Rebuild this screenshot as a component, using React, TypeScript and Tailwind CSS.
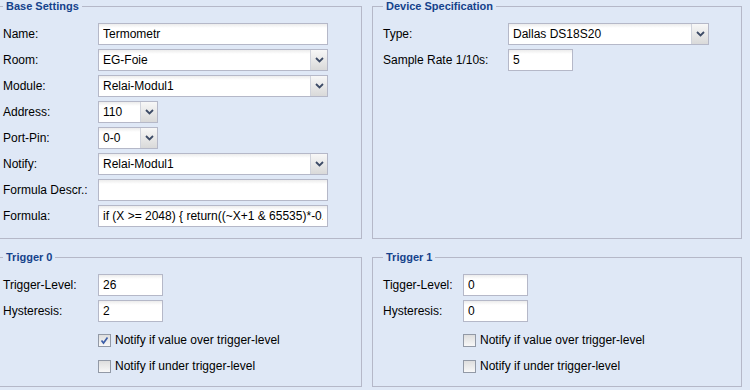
import React from "react";

const inputCls =
  "h-[22px] border border-[#b5b8c8] bg-[linear-gradient(#ececec,#ffffff_4px)] px-[4px] text-[12px] text-black outline-none font-['Liberation_Sans',Arial,sans-serif]";

const Row = ({ label, labelW, children }: { label: string; labelW: string; children: React.ReactNode }) => (
  <div className="flex items-center h-[22px]">
    <label className={`${labelW} shrink-0 text-[12px] text-black`}>{label}</label>
    {children}
  </div>
);

const TextBox = ({ value, w }: { value: string; w: string }) => (
  <input readOnly defaultValue={value} className={`${inputCls} ${w}`} />
);

// combo box drawn by hand, native select looks different
const Combo = ({ value, w }: { value: string; w: string }) => (
  <div className={`flex h-[22px] border border-[#b5b8c8] ${w}`}>
    <div className="flex-1 flex items-center px-[4px] text-[12px] bg-[linear-gradient(#ececec,#ffffff_4px)] overflow-hidden whitespace-nowrap">
      {value}
    </div>
    <div className="w-[17px] flex items-center justify-center border-l border-[#d0d3dc] bg-[linear-gradient(#f7f7f7,#d9d9d9)]">
      <svg width="9" height="6" viewBox="0 0 9 6">
        <polyline points="1,1 4.5,4.5 8,1" fill="none" stroke="#3d4b66" strokeWidth="1.8" />
      </svg>
    </div>
  </div>
);

const Check = ({ checked, label }: { checked?: boolean; label: string }) => (
  <div className="flex items-center h-[22px]">
    <span className="w-[13px] h-[13px] border border-[#9299a6] bg-[linear-gradient(#dedede,#f8f8f8)] flex items-center justify-center">
      {checked && (
        <svg width="9" height="9" viewBox="0 0 9 9">
          <polyline points="1.5,4.5 3.5,7 7.5,1.5" fill="none" stroke="#3c5ea8" strokeWidth="1.7" />
        </svg>
      )}
    </span>
    <span className="ml-[4px] text-[12px] text-black">{label}</span>
  </div>
);

const Fieldset = ({ title, pb, children }: { title: string; pb: string; children: React.ReactNode }) => (
  <fieldset className={`border border-[#b5b8c8] px-[10px] pt-[10px] ${pb} min-w-0`}>
    <legend className="px-[3px] text-[11px] leading-[13px] font-bold text-[#15428b]">{title}</legend>
    <div className="flex flex-col gap-[4px]">{children}</div>
  </fieldset>
);

export default function App() {
  return (
    <div className="w-[750px] h-[390px] overflow-hidden bg-[#dfe8f6] font-['Liberation_Sans',Arial,sans-serif] text-[12px]">
      <div className="grid grid-cols-[370px_370px] gap-x-[10px] gap-y-[12px] -ml-[8px]">
        {/* Base Settings */}
        <Fieldset title="Base Settings" pb="pb-[11px]">
          <Row label="Name:" labelW="w-[95px]">
            <TextBox value="Termometr" w="w-[230px]" />
          </Row>
          <Row label="Room:" labelW="w-[95px]">
            <Combo value="EG-Foie" w="w-[230px]" />
          </Row>
          <Row label="Module:" labelW="w-[95px]">
            <Combo value="Relai-Modul1" w="w-[230px]" />
          </Row>
          <Row label="Address:" labelW="w-[95px]">
            <Combo value="110" w="w-[60px]" />
          </Row>
          <Row label="Port-Pin:" labelW="w-[95px]">
            <Combo value="0-0" w="w-[60px]" />
          </Row>
          <Row label="Notify:" labelW="w-[95px]">
            <Combo value="Relai-Modul1" w="w-[230px]" />
          </Row>
          <Row label="Formula Descr.:" labelW="w-[95px]">
            <TextBox value="" w="w-[230px]" />
          </Row>
          <Row label="Formula:" labelW="w-[95px]">
            <TextBox value="if (X >= 2048) { return((~X+1 & 65535)*-0.0625); } else { return(X*0.0625); }" w="w-[230px]" />
          </Row>
        </Fieldset>

        {/* Device Specification */}
        <Fieldset title="Device Specification" pb="pb-[11px]">
          <Row label="Type:" labelW="w-[125px]">
            <Combo value="Dallas DS18S20" w="w-[201px]" />
          </Row>
          <Row label="Sample Rate 1/10s:" labelW="w-[125px]">
            <TextBox value="5" w="w-[65px]" />
          </Row>
        </Fieldset>

        {/* Trigger 0 */}
        <Fieldset title="Trigger 0" pb="pb-[9px]">
          <Row label="Trigger-Level:" labelW="w-[95px]">
            <TextBox value="26" w="w-[65px]" />
          </Row>
          <Row label="Hysteresis:" labelW="w-[95px]">
            <TextBox value="2" w="w-[65px]" />
          </Row>
          <div className="ml-[95px] mt-[3px] flex flex-col gap-[4px]">
            <Check checked label="Notify if value over trigger-level" />
            <Check label="Notify if under trigger-level" />
          </div>
        </Fieldset>

        {/* Trigger 1 */}
        <Fieldset title="Trigger 1" pb="pb-[9px]">
          <Row label="Tigger-Level:" labelW="w-[80px]">
            <TextBox value="0" w="w-[65px]" />
          </Row>
          <Row label="Hysteresis:" labelW="w-[80px]">
            <TextBox value="0" w="w-[65px]" />
          </Row>
          <div className="ml-[80px] mt-[3px] flex flex-col gap-[4px]">
            <Check label="Notify if value over trigger-level" />
            <Check label="Notify if under trigger-level" />
          </div>
        </Fieldset>
      </div>
    </div>
  );
}
